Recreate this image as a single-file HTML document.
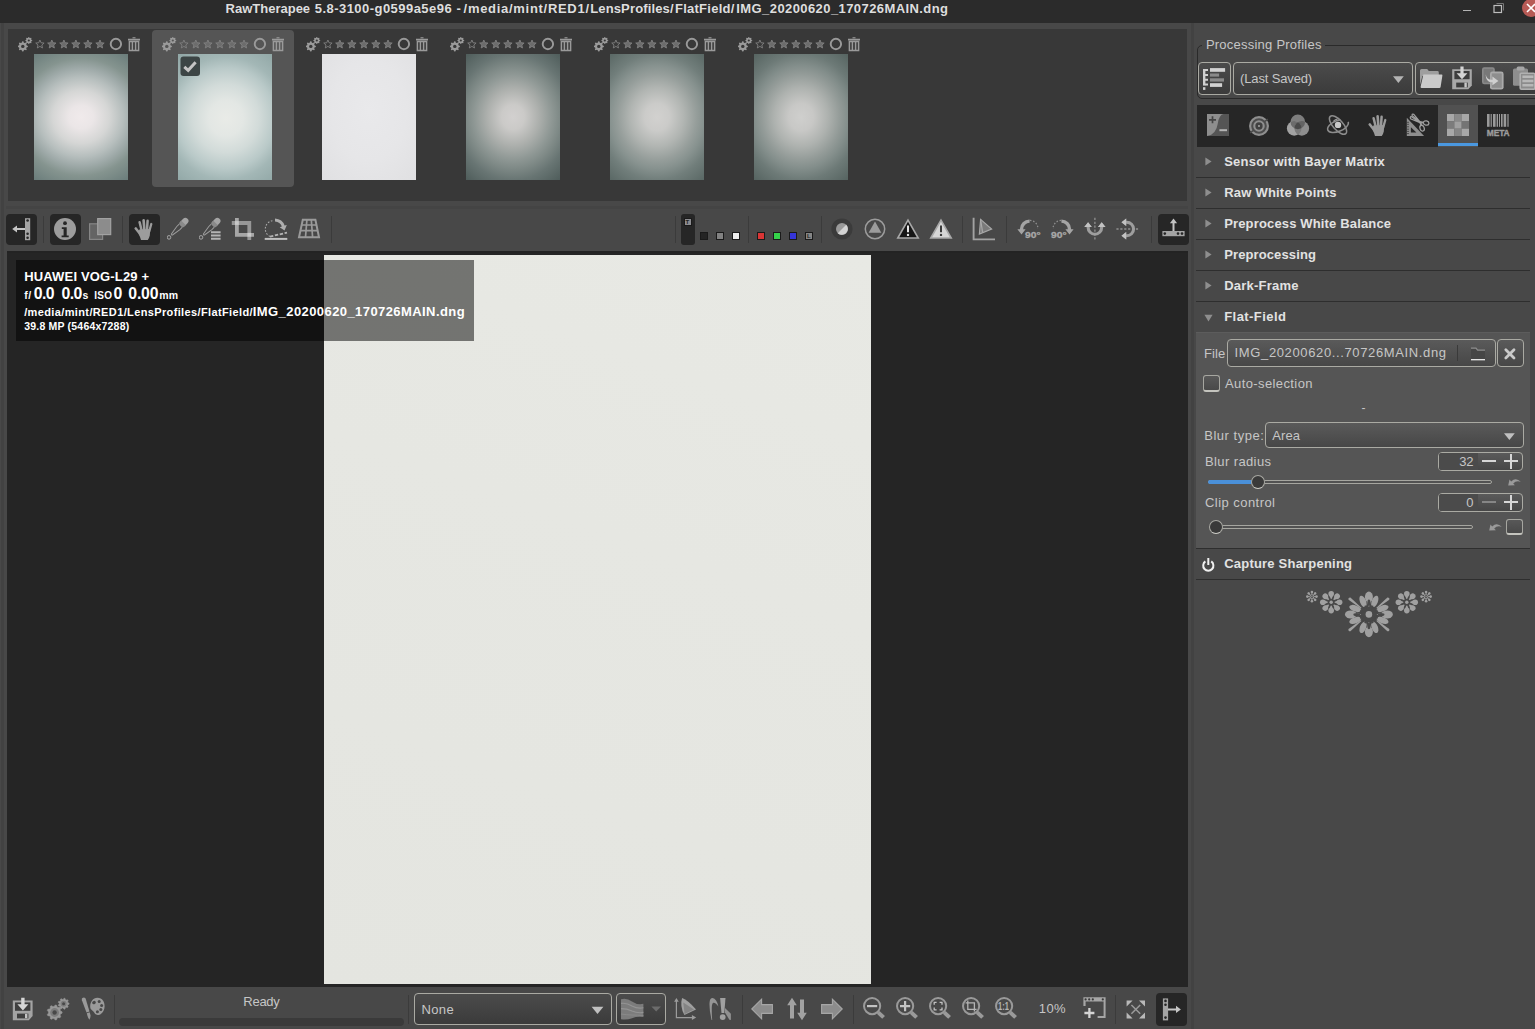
<!DOCTYPE html>
<html><head><meta charset="utf-8"><title>RawTherapee</title>
<style>
html,body{margin:0;padding:0;background:#484848;}
body{width:1535px;height:1029px;position:relative;overflow:hidden;font-family:"Liberation Sans",sans-serif;font-size:13px;color:#c8c8c8;}
body div,body span,body svg{position:absolute;box-sizing:border-box;}
span{white-space:pre;}
.sep{background:#3a3a3a;width:1px;}
.hl{background:#2c2c2c;height:2px;}
.btn{border:1px solid #8f8f8a;border-radius:4px;background:linear-gradient(#4c4c4c,#3a3a3a);}
.dk{background:#262626;border-radius:4px;}
</style></head><body>

<div style="left:0px;top:0px;width:1535px;height:23px;background:#2b2b2b;"></div>
<span style="left:225.6px;top:-0.1px;font-size:13px;line-height:17px;color:#dedede;font-weight:700;letter-spacing:-0.003px;">RawTherapee</span>
<span style="left:314.7px;top:-0.1px;font-size:13px;line-height:17px;color:#dedede;font-weight:700;letter-spacing:0.463px;">5.8-3100-g0599a5e96</span>
<span style="left:456.5px;top:-0.1px;font-size:13px;line-height:17px;color:#dedede;font-weight:700;">-</span>
<span style="left:463.6px;top:-0.1px;font-size:13px;line-height:17px;color:#dedede;font-weight:700;letter-spacing:0.704px;">/media/mint/RED1/</span>
<span style="left:590.2px;top:-0.1px;font-size:13px;line-height:17px;color:#dedede;font-weight:700;letter-spacing:0.147px;">LensProfiles/</span>
<span style="left:675px;top:-0.1px;font-size:13px;line-height:17px;color:#dedede;font-weight:700;letter-spacing:0.249px;">FlatField/</span>
<span style="left:736.3px;top:-0.1px;font-size:13px;line-height:17px;color:#dedede;font-weight:700;letter-spacing:0.416px;">IMG_20200620_170726MAIN.dng</span>
<div style="left:1463px;top:9.6px;width:8px;height:1.3px;background:#b4b4b4;"></div>
<svg style="left:1492.4px;top:1.3px;" width="14" height="13" viewBox="0 0 14 13"><path d="M4.5 2.5h7v7" fill="none" stroke="#777" stroke-width="1"/><rect x="2" y="4.5" width="7.5" height="7" fill="none" stroke="#bdbdbd" stroke-width="1.2"/></svg>
<svg style="left:1521px;top:-1px;" width="18" height="18" viewBox="0 0 18 18"><circle cx="10" cy="9" r="9" fill="#b85b56"/><path d="M6 5l8 8M14 5l-8 8" stroke="#fff" stroke-width="1.6"/></svg>
<div style="left:1px;top:23px;width:3px;height:1006px;background:#424242;"></div>
<div style="left:8px;top:29px;width:1179px;height:172px;background:#383838;"></div>
<div style="left:6px;top:206px;width:1182px;height:3px;background:#444444;"></div>
<div style="left:7px;top:251px;width:1181px;height:736px;background:#252525;"></div>
<div style="left:7px;top:251px;width:1181px;height:2px;background:#232323;"></div>
<div style="left:324px;top:255px;width:547px;height:729px;background:linear-gradient(200deg,#e8e9e4 0%,#e6e7e2 40%,#e4e5e0 100%);"></div>
<div style="left:16px;top:260px;width:458px;height:81px;background:rgba(0,0,0,0.5);"></div>
<div style="left:1191px;top:23px;width:3px;height:1006px;background:#424242;"></div>
<span style="left:24.2px;top:268.0px;font-size:13px;line-height:17px;color:#ffffff;font-weight:700;letter-spacing:0.16px;">HUAWEI VOG-L29 +</span>
<span style="left:24.2px;top:288.36px;font-size:10.5px;line-height:14px;color:#ffffff;font-weight:700;letter-spacing:0.6px;">f/</span>
<span style="left:33.7px;top:283.53px;font-size:15.8px;line-height:20px;color:#ffffff;font-weight:700;letter-spacing:-0.55px;">0.0</span>
<span style="left:61.4px;top:283.53px;font-size:15.8px;line-height:20px;color:#ffffff;font-weight:700;letter-spacing:-0.55px;">0.0</span>
<span style="left:82.6px;top:288.36px;font-size:10.5px;line-height:14px;color:#ffffff;font-weight:700;">s</span>
<span style="left:94.3px;top:288.54px;font-size:10px;line-height:14px;color:#ffffff;font-weight:700;letter-spacing:0.25px;">ISO</span>
<span style="left:113.6px;top:283.53px;font-size:15.8px;line-height:20px;color:#ffffff;font-weight:700;">0</span>
<span style="left:128.3px;top:283.53px;font-size:15.8px;line-height:20px;color:#ffffff;font-weight:700;letter-spacing:-0.2px;">0.00</span>
<span style="left:159.3px;top:288.36px;font-size:10.5px;line-height:14px;color:#ffffff;font-weight:700;letter-spacing:0.2px;">mm</span>
<span style="left:24.2px;top:304.69px;font-size:11px;line-height:15px;color:#ffffff;font-weight:700;letter-spacing:0.37px;">/media/mint/RED1/LensProfiles/FlatField/</span>
<span style="left:252.8px;top:303.0px;font-size:13px;line-height:17px;color:#ffffff;font-weight:700;letter-spacing:0.42px;">IMG_20200620_170726MAIN.dng</span>
<span style="left:24.2px;top:318.96px;font-size:10.5px;line-height:14px;color:#ffffff;font-weight:700;letter-spacing:0.2px;">39.8 MP (5464x7288)</span>
<div style="left:34px;top:54px;width:94px;height:126px;background:radial-gradient(ellipse 60% 42% at 50% 50%, #f0eaeb 0%, #ebe6e7 22%, #d5d6d5 50%, #b6bebd 75%, #a0abaa 91%, #85948f 111%, #6c7e7c 143%);"></div>
<svg style="left:17.5px;top:36.8px;" width="15" height="15" viewBox="0 0 15 15"><polygon points="9.88,8.90 9.88,9.90 8.53,10.53 8.24,11.24 8.74,12.64 8.04,13.34 6.64,12.84 5.93,13.13 5.30,14.48 4.30,14.48 3.67,13.13 2.96,12.84 1.56,13.34 0.86,12.64 1.36,11.24 1.07,10.53 -0.28,9.90 -0.28,8.90 1.07,8.27 1.36,7.56 0.86,6.16 1.56,5.46 2.96,5.96 3.67,5.67 4.30,4.32 5.30,4.32 5.93,5.67 6.64,5.96 8.04,5.46 8.74,6.16 8.24,7.56 8.53,8.27" fill="#9a9a9a"/><circle cx="4.8" cy="9.4" r="1.7" fill="#383838"/><polygon points="14.28,3.16 14.28,3.84 13.38,4.28 13.18,4.77 13.51,5.72 13.02,6.21 12.07,5.88 11.58,6.08 11.14,6.98 10.46,6.98 10.02,6.08 9.53,5.88 8.58,6.21 8.09,5.72 8.42,4.77 8.22,4.28 7.32,3.84 7.32,3.16 8.22,2.72 8.42,2.23 8.09,1.28 8.58,0.79 9.53,1.12 10.02,0.92 10.46,0.02 11.14,0.02 11.58,0.92 12.07,1.12 13.02,0.79 13.51,1.28 13.18,2.23 13.38,2.72" fill="#9a9a9a"/><circle cx="10.8" cy="3.5" r="1.1" fill="#383838"/></svg>
<svg style="left:35px;top:39px;" width="72" height="11" viewBox="0 0 72 11"><polygon points="4.90,1.00 6.08,3.78 9.08,4.04 6.80,6.02 7.49,8.96 4.90,7.40 2.31,8.96 3.00,6.02 0.72,4.04 3.72,3.78" fill="#383838" stroke="#808080" stroke-width="0.9"/><polygon points="16.80,1.00 17.98,3.78 20.98,4.04 18.70,6.02 19.39,8.96 16.80,7.40 14.21,8.96 14.90,6.02 12.62,4.04 15.62,3.78" fill="#6c6c6c" stroke="#808080" stroke-width="0.9"/><polygon points="28.90,1.00 30.08,3.78 33.08,4.04 30.80,6.02 31.49,8.96 28.90,7.40 26.31,8.96 27.00,6.02 24.72,4.04 27.72,3.78" fill="#6c6c6c" stroke="#808080" stroke-width="0.9"/><polygon points="40.90,1.00 42.08,3.78 45.08,4.04 42.80,6.02 43.49,8.96 40.90,7.40 38.31,8.96 39.00,6.02 36.72,4.04 39.72,3.78" fill="#6c6c6c" stroke="#808080" stroke-width="0.9"/><polygon points="52.90,1.00 54.08,3.78 57.08,4.04 54.80,6.02 55.49,8.96 52.90,7.40 50.31,8.96 51.00,6.02 48.72,4.04 51.72,3.78" fill="#6c6c6c" stroke="#808080" stroke-width="0.9"/><polygon points="65.00,1.00 66.18,3.78 69.18,4.04 66.90,6.02 67.59,8.96 65.00,7.40 62.41,8.96 63.10,6.02 60.82,4.04 63.82,3.78" fill="#6c6c6c" stroke="#808080" stroke-width="0.9"/></svg>
<svg style="left:109px;top:37px;" width="14" height="14" viewBox="0 0 14 14"><circle cx="6.9" cy="7" r="5.2" fill="none" stroke="#9a9a9a" stroke-width="1.9"/></svg>
<svg style="left:127px;top:36px;" width="14" height="16" viewBox="0 0 14 16"><path d="M5.5 1.2h3v1h-3z M1 2.8h12v1.8h-12z" fill="#9a9a9a"/><path d="M2.4 5.6h9.2v9h-9.2z" fill="none" stroke="#9a9a9a" stroke-width="1.5"/><path d="M5.4 6v8M8.6 6v8" stroke="#9a9a9a" stroke-width="1.5"/></svg>
<div style="left:152px;top:30px;width:142px;height:157px;background:#555555;border-radius:4px;"></div>
<div style="left:178px;top:54px;width:94px;height:126px;background:radial-gradient(ellipse 57% 44% at 51% 51%, #e9ebe7 0%, #e3e7e4 32%, #d2dbd9 62%, #b9c9c8 91%, #a3b7b6 111%, #92a8a7 143%);"></div>
<svg style="left:161.5px;top:36.8px;" width="15" height="15" viewBox="0 0 15 15"><polygon points="9.88,8.90 9.88,9.90 8.53,10.53 8.24,11.24 8.74,12.64 8.04,13.34 6.64,12.84 5.93,13.13 5.30,14.48 4.30,14.48 3.67,13.13 2.96,12.84 1.56,13.34 0.86,12.64 1.36,11.24 1.07,10.53 -0.28,9.90 -0.28,8.90 1.07,8.27 1.36,7.56 0.86,6.16 1.56,5.46 2.96,5.96 3.67,5.67 4.30,4.32 5.30,4.32 5.93,5.67 6.64,5.96 8.04,5.46 8.74,6.16 8.24,7.56 8.53,8.27" fill="#9a9a9a"/><circle cx="4.8" cy="9.4" r="1.7" fill="#555555"/><polygon points="14.28,3.16 14.28,3.84 13.38,4.28 13.18,4.77 13.51,5.72 13.02,6.21 12.07,5.88 11.58,6.08 11.14,6.98 10.46,6.98 10.02,6.08 9.53,5.88 8.58,6.21 8.09,5.72 8.42,4.77 8.22,4.28 7.32,3.84 7.32,3.16 8.22,2.72 8.42,2.23 8.09,1.28 8.58,0.79 9.53,1.12 10.02,0.92 10.46,0.02 11.14,0.02 11.58,0.92 12.07,1.12 13.02,0.79 13.51,1.28 13.18,2.23 13.38,2.72" fill="#9a9a9a"/><circle cx="10.8" cy="3.5" r="1.1" fill="#555555"/></svg>
<svg style="left:179px;top:39px;" width="72" height="11" viewBox="0 0 72 11"><polygon points="4.90,1.00 6.08,3.78 9.08,4.04 6.80,6.02 7.49,8.96 4.90,7.40 2.31,8.96 3.00,6.02 0.72,4.04 3.72,3.78" fill="#555555" stroke="#808080" stroke-width="0.9"/><polygon points="16.80,1.00 17.98,3.78 20.98,4.04 18.70,6.02 19.39,8.96 16.80,7.40 14.21,8.96 14.90,6.02 12.62,4.04 15.62,3.78" fill="#6c6c6c" stroke="#808080" stroke-width="0.9"/><polygon points="28.90,1.00 30.08,3.78 33.08,4.04 30.80,6.02 31.49,8.96 28.90,7.40 26.31,8.96 27.00,6.02 24.72,4.04 27.72,3.78" fill="#6c6c6c" stroke="#808080" stroke-width="0.9"/><polygon points="40.90,1.00 42.08,3.78 45.08,4.04 42.80,6.02 43.49,8.96 40.90,7.40 38.31,8.96 39.00,6.02 36.72,4.04 39.72,3.78" fill="#6c6c6c" stroke="#808080" stroke-width="0.9"/><polygon points="52.90,1.00 54.08,3.78 57.08,4.04 54.80,6.02 55.49,8.96 52.90,7.40 50.31,8.96 51.00,6.02 48.72,4.04 51.72,3.78" fill="#6c6c6c" stroke="#808080" stroke-width="0.9"/><polygon points="65.00,1.00 66.18,3.78 69.18,4.04 66.90,6.02 67.59,8.96 65.00,7.40 62.41,8.96 63.10,6.02 60.82,4.04 63.82,3.78" fill="#6c6c6c" stroke="#808080" stroke-width="0.9"/></svg>
<svg style="left:253px;top:37px;" width="14" height="14" viewBox="0 0 14 14"><circle cx="6.9" cy="7" r="5.2" fill="none" stroke="#9a9a9a" stroke-width="1.9"/></svg>
<svg style="left:271px;top:36px;" width="14" height="16" viewBox="0 0 14 16"><path d="M5.5 1.2h3v1h-3z M1 2.8h12v1.8h-12z" fill="#9a9a9a"/><path d="M2.4 5.6h9.2v9h-9.2z" fill="none" stroke="#9a9a9a" stroke-width="1.5"/><path d="M5.4 6v8M8.6 6v8" stroke="#9a9a9a" stroke-width="1.5"/></svg>
<div style="left:322px;top:54px;width:94px;height:126px;background:radial-gradient(ellipse 80% 80% at 50% 45%, #e9e9eb 0%, #e6e6e8 50%, #dfdfe1 100%);"></div>
<svg style="left:305.5px;top:36.8px;" width="15" height="15" viewBox="0 0 15 15"><polygon points="9.88,8.90 9.88,9.90 8.53,10.53 8.24,11.24 8.74,12.64 8.04,13.34 6.64,12.84 5.93,13.13 5.30,14.48 4.30,14.48 3.67,13.13 2.96,12.84 1.56,13.34 0.86,12.64 1.36,11.24 1.07,10.53 -0.28,9.90 -0.28,8.90 1.07,8.27 1.36,7.56 0.86,6.16 1.56,5.46 2.96,5.96 3.67,5.67 4.30,4.32 5.30,4.32 5.93,5.67 6.64,5.96 8.04,5.46 8.74,6.16 8.24,7.56 8.53,8.27" fill="#9a9a9a"/><circle cx="4.8" cy="9.4" r="1.7" fill="#383838"/><polygon points="14.28,3.16 14.28,3.84 13.38,4.28 13.18,4.77 13.51,5.72 13.02,6.21 12.07,5.88 11.58,6.08 11.14,6.98 10.46,6.98 10.02,6.08 9.53,5.88 8.58,6.21 8.09,5.72 8.42,4.77 8.22,4.28 7.32,3.84 7.32,3.16 8.22,2.72 8.42,2.23 8.09,1.28 8.58,0.79 9.53,1.12 10.02,0.92 10.46,0.02 11.14,0.02 11.58,0.92 12.07,1.12 13.02,0.79 13.51,1.28 13.18,2.23 13.38,2.72" fill="#9a9a9a"/><circle cx="10.8" cy="3.5" r="1.1" fill="#383838"/></svg>
<svg style="left:323px;top:39px;" width="72" height="11" viewBox="0 0 72 11"><polygon points="4.90,1.00 6.08,3.78 9.08,4.04 6.80,6.02 7.49,8.96 4.90,7.40 2.31,8.96 3.00,6.02 0.72,4.04 3.72,3.78" fill="#383838" stroke="#808080" stroke-width="0.9"/><polygon points="16.80,1.00 17.98,3.78 20.98,4.04 18.70,6.02 19.39,8.96 16.80,7.40 14.21,8.96 14.90,6.02 12.62,4.04 15.62,3.78" fill="#6c6c6c" stroke="#808080" stroke-width="0.9"/><polygon points="28.90,1.00 30.08,3.78 33.08,4.04 30.80,6.02 31.49,8.96 28.90,7.40 26.31,8.96 27.00,6.02 24.72,4.04 27.72,3.78" fill="#6c6c6c" stroke="#808080" stroke-width="0.9"/><polygon points="40.90,1.00 42.08,3.78 45.08,4.04 42.80,6.02 43.49,8.96 40.90,7.40 38.31,8.96 39.00,6.02 36.72,4.04 39.72,3.78" fill="#6c6c6c" stroke="#808080" stroke-width="0.9"/><polygon points="52.90,1.00 54.08,3.78 57.08,4.04 54.80,6.02 55.49,8.96 52.90,7.40 50.31,8.96 51.00,6.02 48.72,4.04 51.72,3.78" fill="#6c6c6c" stroke="#808080" stroke-width="0.9"/><polygon points="65.00,1.00 66.18,3.78 69.18,4.04 66.90,6.02 67.59,8.96 65.00,7.40 62.41,8.96 63.10,6.02 60.82,4.04 63.82,3.78" fill="#6c6c6c" stroke="#808080" stroke-width="0.9"/></svg>
<svg style="left:397px;top:37px;" width="14" height="14" viewBox="0 0 14 14"><circle cx="6.9" cy="7" r="5.2" fill="none" stroke="#9a9a9a" stroke-width="1.9"/></svg>
<svg style="left:415px;top:36px;" width="14" height="16" viewBox="0 0 14 16"><path d="M5.5 1.2h3v1h-3z M1 2.8h12v1.8h-12z" fill="#9a9a9a"/><path d="M2.4 5.6h9.2v9h-9.2z" fill="none" stroke="#9a9a9a" stroke-width="1.5"/><path d="M5.4 6v8M8.6 6v8" stroke="#9a9a9a" stroke-width="1.5"/></svg>
<div style="left:466px;top:54px;width:94px;height:126px;background:radial-gradient(ellipse 55% 45% at 50% 50%, #d2d0cf 0%, #cbcac8 22%, #adb0ad 50%, #8f9895 75%, #7e8986 91%, #687573 111%, #4f5d5b 143%);"></div>
<svg style="left:449.5px;top:36.8px;" width="15" height="15" viewBox="0 0 15 15"><polygon points="9.88,8.90 9.88,9.90 8.53,10.53 8.24,11.24 8.74,12.64 8.04,13.34 6.64,12.84 5.93,13.13 5.30,14.48 4.30,14.48 3.67,13.13 2.96,12.84 1.56,13.34 0.86,12.64 1.36,11.24 1.07,10.53 -0.28,9.90 -0.28,8.90 1.07,8.27 1.36,7.56 0.86,6.16 1.56,5.46 2.96,5.96 3.67,5.67 4.30,4.32 5.30,4.32 5.93,5.67 6.64,5.96 8.04,5.46 8.74,6.16 8.24,7.56 8.53,8.27" fill="#9a9a9a"/><circle cx="4.8" cy="9.4" r="1.7" fill="#383838"/><polygon points="14.28,3.16 14.28,3.84 13.38,4.28 13.18,4.77 13.51,5.72 13.02,6.21 12.07,5.88 11.58,6.08 11.14,6.98 10.46,6.98 10.02,6.08 9.53,5.88 8.58,6.21 8.09,5.72 8.42,4.77 8.22,4.28 7.32,3.84 7.32,3.16 8.22,2.72 8.42,2.23 8.09,1.28 8.58,0.79 9.53,1.12 10.02,0.92 10.46,0.02 11.14,0.02 11.58,0.92 12.07,1.12 13.02,0.79 13.51,1.28 13.18,2.23 13.38,2.72" fill="#9a9a9a"/><circle cx="10.8" cy="3.5" r="1.1" fill="#383838"/></svg>
<svg style="left:467px;top:39px;" width="72" height="11" viewBox="0 0 72 11"><polygon points="4.90,1.00 6.08,3.78 9.08,4.04 6.80,6.02 7.49,8.96 4.90,7.40 2.31,8.96 3.00,6.02 0.72,4.04 3.72,3.78" fill="#383838" stroke="#808080" stroke-width="0.9"/><polygon points="16.80,1.00 17.98,3.78 20.98,4.04 18.70,6.02 19.39,8.96 16.80,7.40 14.21,8.96 14.90,6.02 12.62,4.04 15.62,3.78" fill="#6c6c6c" stroke="#808080" stroke-width="0.9"/><polygon points="28.90,1.00 30.08,3.78 33.08,4.04 30.80,6.02 31.49,8.96 28.90,7.40 26.31,8.96 27.00,6.02 24.72,4.04 27.72,3.78" fill="#6c6c6c" stroke="#808080" stroke-width="0.9"/><polygon points="40.90,1.00 42.08,3.78 45.08,4.04 42.80,6.02 43.49,8.96 40.90,7.40 38.31,8.96 39.00,6.02 36.72,4.04 39.72,3.78" fill="#6c6c6c" stroke="#808080" stroke-width="0.9"/><polygon points="52.90,1.00 54.08,3.78 57.08,4.04 54.80,6.02 55.49,8.96 52.90,7.40 50.31,8.96 51.00,6.02 48.72,4.04 51.72,3.78" fill="#6c6c6c" stroke="#808080" stroke-width="0.9"/><polygon points="65.00,1.00 66.18,3.78 69.18,4.04 66.90,6.02 67.59,8.96 65.00,7.40 62.41,8.96 63.10,6.02 60.82,4.04 63.82,3.78" fill="#6c6c6c" stroke="#808080" stroke-width="0.9"/></svg>
<svg style="left:541px;top:37px;" width="14" height="14" viewBox="0 0 14 14"><circle cx="6.9" cy="7" r="5.2" fill="none" stroke="#9a9a9a" stroke-width="1.9"/></svg>
<svg style="left:559px;top:36px;" width="14" height="16" viewBox="0 0 14 16"><path d="M5.5 1.2h3v1h-3z M1 2.8h12v1.8h-12z" fill="#9a9a9a"/><path d="M2.4 5.6h9.2v9h-9.2z" fill="none" stroke="#9a9a9a" stroke-width="1.5"/><path d="M5.4 6v8M8.6 6v8" stroke="#9a9a9a" stroke-width="1.5"/></svg>
<div style="left:610px;top:54px;width:94px;height:126px;background:radial-gradient(ellipse 55% 45% at 50% 50%, #d2d1cf 0%, #cbcbc9 24%, #b1b5b2 52%, #969e9b 76%, #87928f 91%, #717e7b 111%, #5a6865 143%);"></div>
<svg style="left:593.5px;top:36.8px;" width="15" height="15" viewBox="0 0 15 15"><polygon points="9.88,8.90 9.88,9.90 8.53,10.53 8.24,11.24 8.74,12.64 8.04,13.34 6.64,12.84 5.93,13.13 5.30,14.48 4.30,14.48 3.67,13.13 2.96,12.84 1.56,13.34 0.86,12.64 1.36,11.24 1.07,10.53 -0.28,9.90 -0.28,8.90 1.07,8.27 1.36,7.56 0.86,6.16 1.56,5.46 2.96,5.96 3.67,5.67 4.30,4.32 5.30,4.32 5.93,5.67 6.64,5.96 8.04,5.46 8.74,6.16 8.24,7.56 8.53,8.27" fill="#9a9a9a"/><circle cx="4.8" cy="9.4" r="1.7" fill="#383838"/><polygon points="14.28,3.16 14.28,3.84 13.38,4.28 13.18,4.77 13.51,5.72 13.02,6.21 12.07,5.88 11.58,6.08 11.14,6.98 10.46,6.98 10.02,6.08 9.53,5.88 8.58,6.21 8.09,5.72 8.42,4.77 8.22,4.28 7.32,3.84 7.32,3.16 8.22,2.72 8.42,2.23 8.09,1.28 8.58,0.79 9.53,1.12 10.02,0.92 10.46,0.02 11.14,0.02 11.58,0.92 12.07,1.12 13.02,0.79 13.51,1.28 13.18,2.23 13.38,2.72" fill="#9a9a9a"/><circle cx="10.8" cy="3.5" r="1.1" fill="#383838"/></svg>
<svg style="left:611px;top:39px;" width="72" height="11" viewBox="0 0 72 11"><polygon points="4.90,1.00 6.08,3.78 9.08,4.04 6.80,6.02 7.49,8.96 4.90,7.40 2.31,8.96 3.00,6.02 0.72,4.04 3.72,3.78" fill="#383838" stroke="#808080" stroke-width="0.9"/><polygon points="16.80,1.00 17.98,3.78 20.98,4.04 18.70,6.02 19.39,8.96 16.80,7.40 14.21,8.96 14.90,6.02 12.62,4.04 15.62,3.78" fill="#6c6c6c" stroke="#808080" stroke-width="0.9"/><polygon points="28.90,1.00 30.08,3.78 33.08,4.04 30.80,6.02 31.49,8.96 28.90,7.40 26.31,8.96 27.00,6.02 24.72,4.04 27.72,3.78" fill="#6c6c6c" stroke="#808080" stroke-width="0.9"/><polygon points="40.90,1.00 42.08,3.78 45.08,4.04 42.80,6.02 43.49,8.96 40.90,7.40 38.31,8.96 39.00,6.02 36.72,4.04 39.72,3.78" fill="#6c6c6c" stroke="#808080" stroke-width="0.9"/><polygon points="52.90,1.00 54.08,3.78 57.08,4.04 54.80,6.02 55.49,8.96 52.90,7.40 50.31,8.96 51.00,6.02 48.72,4.04 51.72,3.78" fill="#6c6c6c" stroke="#808080" stroke-width="0.9"/><polygon points="65.00,1.00 66.18,3.78 69.18,4.04 66.90,6.02 67.59,8.96 65.00,7.40 62.41,8.96 63.10,6.02 60.82,4.04 63.82,3.78" fill="#6c6c6c" stroke="#808080" stroke-width="0.9"/></svg>
<svg style="left:685px;top:37px;" width="14" height="14" viewBox="0 0 14 14"><circle cx="6.9" cy="7" r="5.2" fill="none" stroke="#9a9a9a" stroke-width="1.9"/></svg>
<svg style="left:703px;top:36px;" width="14" height="16" viewBox="0 0 14 16"><path d="M5.5 1.2h3v1h-3z M1 2.8h12v1.8h-12z" fill="#9a9a9a"/><path d="M2.4 5.6h9.2v9h-9.2z" fill="none" stroke="#9a9a9a" stroke-width="1.5"/><path d="M5.4 6v8M8.6 6v8" stroke="#9a9a9a" stroke-width="1.5"/></svg>
<div style="left:754px;top:54px;width:94px;height:126px;background:radial-gradient(ellipse 55% 45% at 50% 50%, #cfcfcd 0%, #c8c8c6 24%, #aeb2af 52%, #939b98 76%, #838e8b 91%, #6d7a77 111%, #566461 143%);"></div>
<svg style="left:737.5px;top:36.8px;" width="15" height="15" viewBox="0 0 15 15"><polygon points="9.88,8.90 9.88,9.90 8.53,10.53 8.24,11.24 8.74,12.64 8.04,13.34 6.64,12.84 5.93,13.13 5.30,14.48 4.30,14.48 3.67,13.13 2.96,12.84 1.56,13.34 0.86,12.64 1.36,11.24 1.07,10.53 -0.28,9.90 -0.28,8.90 1.07,8.27 1.36,7.56 0.86,6.16 1.56,5.46 2.96,5.96 3.67,5.67 4.30,4.32 5.30,4.32 5.93,5.67 6.64,5.96 8.04,5.46 8.74,6.16 8.24,7.56 8.53,8.27" fill="#9a9a9a"/><circle cx="4.8" cy="9.4" r="1.7" fill="#383838"/><polygon points="14.28,3.16 14.28,3.84 13.38,4.28 13.18,4.77 13.51,5.72 13.02,6.21 12.07,5.88 11.58,6.08 11.14,6.98 10.46,6.98 10.02,6.08 9.53,5.88 8.58,6.21 8.09,5.72 8.42,4.77 8.22,4.28 7.32,3.84 7.32,3.16 8.22,2.72 8.42,2.23 8.09,1.28 8.58,0.79 9.53,1.12 10.02,0.92 10.46,0.02 11.14,0.02 11.58,0.92 12.07,1.12 13.02,0.79 13.51,1.28 13.18,2.23 13.38,2.72" fill="#9a9a9a"/><circle cx="10.8" cy="3.5" r="1.1" fill="#383838"/></svg>
<svg style="left:755px;top:39px;" width="72" height="11" viewBox="0 0 72 11"><polygon points="4.90,1.00 6.08,3.78 9.08,4.04 6.80,6.02 7.49,8.96 4.90,7.40 2.31,8.96 3.00,6.02 0.72,4.04 3.72,3.78" fill="#383838" stroke="#808080" stroke-width="0.9"/><polygon points="16.80,1.00 17.98,3.78 20.98,4.04 18.70,6.02 19.39,8.96 16.80,7.40 14.21,8.96 14.90,6.02 12.62,4.04 15.62,3.78" fill="#6c6c6c" stroke="#808080" stroke-width="0.9"/><polygon points="28.90,1.00 30.08,3.78 33.08,4.04 30.80,6.02 31.49,8.96 28.90,7.40 26.31,8.96 27.00,6.02 24.72,4.04 27.72,3.78" fill="#6c6c6c" stroke="#808080" stroke-width="0.9"/><polygon points="40.90,1.00 42.08,3.78 45.08,4.04 42.80,6.02 43.49,8.96 40.90,7.40 38.31,8.96 39.00,6.02 36.72,4.04 39.72,3.78" fill="#6c6c6c" stroke="#808080" stroke-width="0.9"/><polygon points="52.90,1.00 54.08,3.78 57.08,4.04 54.80,6.02 55.49,8.96 52.90,7.40 50.31,8.96 51.00,6.02 48.72,4.04 51.72,3.78" fill="#6c6c6c" stroke="#808080" stroke-width="0.9"/><polygon points="65.00,1.00 66.18,3.78 69.18,4.04 66.90,6.02 67.59,8.96 65.00,7.40 62.41,8.96 63.10,6.02 60.82,4.04 63.82,3.78" fill="#6c6c6c" stroke="#808080" stroke-width="0.9"/></svg>
<svg style="left:829px;top:37px;" width="14" height="14" viewBox="0 0 14 14"><circle cx="6.9" cy="7" r="5.2" fill="none" stroke="#9a9a9a" stroke-width="1.9"/></svg>
<svg style="left:847px;top:36px;" width="14" height="16" viewBox="0 0 14 16"><path d="M5.5 1.2h3v1h-3z M1 2.8h12v1.8h-12z" fill="#9a9a9a"/><path d="M2.4 5.6h9.2v9h-9.2z" fill="none" stroke="#9a9a9a" stroke-width="1.5"/><path d="M5.4 6v8M8.6 6v8" stroke="#9a9a9a" stroke-width="1.5"/></svg>
<svg style="left:179.7px;top:55.7px;" width="22" height="22" viewBox="0 0 22 22"><rect x="0.5" y="0.5" width="19.5" height="19.5" rx="3" fill="#3c4545"/><path d="M4.3 10.8l3.9 3.5l7.4-8" fill="none" stroke="#c4c4c4" stroke-width="3"/></svg>
<div style="left:6px;top:214px;width:31px;height:31px;background:#262626;border-radius:4px;"></div>
<svg style="left:12px;top:218px;" width="20" height="23" viewBox="0 0 20 23"><path d="M0.2 11L5 7.4V10h8v2H5v2.6z" fill="#c4c4c4"/><rect x="13" y="0.2" width="5.2" height="22" fill="#a4a4a4"/><circle cx="15.6" cy="2.5" r="1.3" fill="#262626"/><circle cx="15.6" cy="15.8" r="1.3" fill="#262626"/><circle cx="15.6" cy="19.7" r="1.3" fill="#262626"/></svg>
<div style="left:43px;top:216px;width:1px;height:27px;background:#3b3b3b;"></div>
<div style="left:50px;top:214px;width:31px;height:31px;background:#262626;border-radius:4px;"></div>
<svg style="left:54px;top:218px;" width="22" height="22" viewBox="0 0 22 22"><circle cx="11" cy="11" r="11" fill="#9c9c9c"/><circle cx="11" cy="5.2" r="1.9" fill="#262626"/><path d="M7.8 9.2h4.9v8.3h2v1.7H7.6v-1.7h2v-6.6H7.8z" fill="#262626"/></svg>
<svg style="left:88px;top:217px;" width="24" height="24" viewBox="0 0 24 24"><rect x="1.6" y="6.8" width="13" height="15.6" fill="#646464" stroke="#868686" stroke-width="1.2"/><rect x="9.7" y="1.6" width="13" height="16" fill="#8c8c8c" stroke="#a2a2a2" stroke-width="1.2"/></svg>
<div style="left:122px;top:216px;width:1px;height:27px;background:#3b3b3b;"></div>
<div style="left:129px;top:214px;width:31px;height:31px;background:#262626;border-radius:4px;"></div>
<svg style="left:134px;top:218px;" width="20" height="23" viewBox="0 0 20 23"><g fill="none" stroke="#9c9c9c" stroke-linecap="round"><path d="M7.8 13L5.6 4.2" stroke-width="2.5"/><path d="M10.4 12L9.6 2.2" stroke-width="2.6"/><path d="M13 12L13.6 2.8" stroke-width="2.5"/><path d="M15.2 13.5L17.3 6" stroke-width="2.3"/><path d="M7 17L1.8 10.5" stroke-width="2.6"/></g><path d="M5.2 11.5L16.3 11L15.8 17.5Q15.2 20 13.8 22H7Q6.5 19.5 4.6 16z" fill="#9c9c9c"/></svg>
<svg style="left:166.5px;top:217.3px;" width="23" height="23" viewBox="0 0 23 23"><g transform="translate(17 5.4) rotate(45)"><rect x="-3.1" y="-5" width="6.2" height="9.6" rx="3.1" fill="#a4a4a4"/><path d="M-3.1 0.6h6.2v2.4a1.6 1.6 0 0 1 -1.6 1.6h-3a1.6 1.6 0 0 1 -1.6 -1.6z" fill="#8a8a8a"/><path d="M-2.2 4.6V8L-0.8 17Q0 18.2 0.8 17L2.2 8V4.6" fill="none" stroke="#9c9c9c" stroke-width="1"/><circle cx="0" cy="21.2" r="1.7" fill="none" stroke="#9c9c9c" stroke-width="1"/></g></svg>
<svg style="left:198.6px;top:217.3px;" width="23" height="23" viewBox="0 0 23 23"><g transform="translate(17 5.4) rotate(45)"><rect x="-3.1" y="-5" width="6.2" height="9.6" rx="3.1" fill="#a4a4a4"/><path d="M-3.1 0.6h6.2v2.4a1.6 1.6 0 0 1 -1.6 1.6h-3a1.6 1.6 0 0 1 -1.6 -1.6z" fill="#8a8a8a"/><path d="M-2.2 4.6V8L-0.8 17Q0 18.2 0.8 17L2.2 8V4.6" fill="none" stroke="#9c9c9c" stroke-width="1"/><circle cx="0" cy="21.2" r="1.7" fill="none" stroke="#9c9c9c" stroke-width="1"/></g><path d="M12 15.3h9.6M12 18.6h9.6M12 21.8h9.6" stroke="#b4b4b4" stroke-width="2"/></svg>
<svg style="left:231px;top:217px;" width="24" height="24" viewBox="0 0 24 24"><path d="M4 1h3.8v14.9H23v3.8H4z" fill="#a6a6a6"/><path d="M0.8 4.1h19.4V23h-3.8V7.9H0.8z" fill="#a6a6a6" fill-opacity="0.85"/><rect x="4" y="4.1" width="3.8" height="3.8" fill="#c8c8c8"/><rect x="16.4" y="15.9" width="3.8" height="3.8" fill="#c8c8c8"/></svg>
<svg style="left:264px;top:217px;" width="24" height="24" viewBox="0 0 24 24"><path d="M0.7 21.9h22.6" stroke="#c0c0c0" stroke-width="2"/><path d="M6 19.6L23 15.6" stroke="#b4b4b4" stroke-width="1.8" stroke-dasharray="3.4 1.6"/><path d="M6 19.5A8.4 8.4 0 0 1 9 3.6" fill="none" stroke="#a8a8a8" stroke-width="1.1" stroke-dasharray="1.6 1.6"/><path d="M11 1.6Q18.5 2.2 20.6 8.6l2.2-.6l-2.3 5.6l-4.8-3.4l2.2-.7Q16.2 5 11 4.6z" fill="#aeaeae"/></svg>
<svg style="left:297px;top:217px;" width="24" height="24" viewBox="0 0 24 24"><g fill="none" stroke="#9a9a9a" stroke-width="1.7"><path d="M5.8 2.8h12.6l3.6 17.4H2z" stroke-width="2"/><path d="M9.9 2.8L8.5 20.2M14.3 2.8l1.3 17.4M4.7 8h15M3.5 13.6h17.2"/></g></svg>
<div style="left:331px;top:216px;width:1px;height:27px;background:#3b3b3b;"></div>
<div style="left:675px;top:216px;width:1px;height:27px;background:#3b3b3b;"></div>
<div style="left:681px;top:214px;width:14px;height:31px;background:#262626;border-radius:3px;"></div>
<div style="left:684px;top:218px;width:8px;height:8px;background:#8c8c90;border:1px solid #1a1a1a;"></div>
<span style="left:685.6px;top:219px;font-size:6px;line-height:6px;color:#222;font-weight:700;">T</span>
<div style="left:700px;top:232px;width:8px;height:8px;background:#242424;border:1px solid #1a1a1a;"></div>
<div style="left:716px;top:232px;width:8px;height:8px;background:#828282;border:1px solid #1a1a1a;"></div>
<div style="left:732px;top:232px;width:8px;height:8px;background:#eeeeee;border:1px solid #1a1a1a;"></div>
<div style="left:748px;top:216px;width:1px;height:27px;background:#3b3b3b;"></div>
<div style="left:757px;top:232px;width:8px;height:8px;background:#d93535;border:1px solid #1a1a1a;"></div>
<div style="left:773px;top:232px;width:8px;height:8px;background:#35d24a;border:1px solid #1a1a1a;"></div>
<div style="left:789px;top:232px;width:8px;height:8px;background:#3535d8;border:1px solid #1a1a1a;"></div>
<div style="left:805px;top:232px;width:8px;height:8px;background:#868686;border:1px solid #1a1a1a;"></div>
<span style="left:807px;top:233px;font-size:6px;line-height:6px;color:#222;font-weight:700;">L</span>
<div style="left:821px;top:216px;width:1px;height:27px;background:#3b3b3b;"></div>
<svg style="left:831px;top:218px;" width="22" height="22" viewBox="0 0 22 22"><circle cx="11" cy="11" r="10.6" fill="#3b3b3b"/><circle cx="11" cy="11" r="6" fill="#9a9a9a"/><path d="M15.24 6.76A6 6 0 0 1 6.76 15.24z" fill="#d4d4d4"/></svg>
<svg style="left:864px;top:218px;" width="22" height="22" viewBox="0 0 22 22"><circle cx="11" cy="11" r="9.7" fill="none" stroke="#9c9c9c" stroke-width="1.5"/><path d="M11 3.6L17.4 14.8H4.6z" fill="#9c9c9c"/></svg>
<svg style="left:896px;top:218px;" width="24" height="22" viewBox="0 0 24 22"><path d="M12 2.2L22.2 20H1.8z" fill="#161616" stroke="#a8a8a8" stroke-width="1.6" stroke-linejoin="miter"/><path d="M12 7.6v6.6" stroke="#e8e8e8" stroke-width="2"/><circle cx="12" cy="16.9" r="1.2" fill="#e8e8e8"/></svg>
<svg style="left:929px;top:218px;" width="24" height="22" viewBox="0 0 24 22"><path d="M12 2.2L22.2 20H1.8z" fill="#d6d6d6" stroke="#a8a8a8" stroke-width="1.6"/><path d="M12 7.6v6.6" stroke="#3a3a3a" stroke-width="2"/><circle cx="12" cy="16.9" r="1.2" fill="#3a3a3a"/></svg>
<div style="left:962px;top:216px;width:1px;height:27px;background:#3b3b3b;"></div>
<svg style="left:972px;top:217px;" width="24" height="24" viewBox="0 0 24 24"><path d="M1.6 0.8V22.4H23" fill="none" stroke="#a2a2a2" stroke-width="1.9"/><path d="M8.6 2.4L19.6 12L7.4 17z" fill="#7a7a7a" stroke="#a8a8a8" stroke-width="1.2"/><path d="M8.6 2.4L10.6 15.6" stroke="#a8a8a8" stroke-width="1.2"/></svg>
<div style="left:1006px;top:216px;width:1px;height:27px;background:#3b3b3b;"></div>
<svg style="left:1017px;top:218px;" width="25" height="23" viewBox="0 0 25 23"><path d="M2.8 11.2A9.8 9.8 0 0 1 12.6 1.4L12.6 4.8A6.4 6.4 0 0 0 6.2 11.2L8.6 11.2L4.5 16.6L0.4 11.2z" fill="#a4a4a4"/><path d="M13 2.4A8.4 8.4 0 0 1 21 11" fill="none" stroke="#8e8e8e" stroke-width="1.2" stroke-dasharray="1.5 1.7"/></svg>
<span style="left:1024.6px;top:229.11px;font-size:9.2px;line-height:13px;color:#a8a8a8;font-weight:700;-webkit-text-stroke:0.3px #a8a8a8;transform:scaleX(1.12);transform-origin:0 0;">90°</span>
<svg style="left:1049px;top:218px;" width="25" height="23" viewBox="0 0 25 23"><path d="M22.2 11.2A9.8 9.8 0 0 0 12.4 1.4L12.4 4.8A6.4 6.4 0 0 1 18.8 11.2L16.4 11.2L20.5 16.6L24.6 11.2z" fill="#a4a4a4"/><path d="M12 2.4A8.4 8.4 0 0 0 4 11" fill="none" stroke="#8e8e8e" stroke-width="1.2" stroke-dasharray="1.5 1.7"/></svg>
<span style="left:1050.6px;top:229.11px;font-size:9.2px;line-height:13px;color:#a8a8a8;font-weight:700;-webkit-text-stroke:0.3px #a8a8a8;transform:scaleX(1.12);transform-origin:0 0;">90°</span>
<svg style="left:1083px;top:217px;" width="24" height="24" viewBox="0 0 24 24"><path d="M11.9 0.8V23.4" stroke="#909090" stroke-width="1.3" stroke-dasharray="2.2 1.7"/><g transform="translate(11.9 10.5)"><path d="M-10.6 -0.6L-6.8 -5.3L-3.1 -0.6H-5.2V0A5.2 5.2 0 0 0 5.2 0V-0.6H3.1L6.8 -5.3L10.6 -0.6H8.3V0A8.3 8.3 0 0 1 -8.3 0V-0.6z" fill="#9e9e9e"/><path d="M-10.6 -0.6L-6.8 -5.3L-3.1 -0.6zM3.1 -0.6L6.8 -5.3L10.6 -0.6z" fill="#c2c2c2"/></g></svg>
<svg style="left:1116px;top:217px;" width="24" height="24" viewBox="0 0 24 24"><path d="M0.4 12H23.6" stroke="#909090" stroke-width="1.3" stroke-dasharray="2.2 1.7"/><g transform="translate(10.8 12) rotate(-90)"><path d="M-10.6 -0.6L-6.8 -5.3L-3.1 -0.6H-5.2V0A5.2 5.2 0 0 0 5.2 0V-0.6H3.1L6.8 -5.3L10.6 -0.6H8.3V0A8.3 8.3 0 0 1 -8.3 0V-0.6z" fill="#9e9e9e"/><path d="M-10.6 -0.6L-6.8 -5.3L-3.1 -0.6zM3.1 -0.6L6.8 -5.3L10.6 -0.6z" fill="#c2c2c2"/></g></svg>
<div style="left:1151px;top:216px;width:1px;height:27px;background:#3b3b3b;"></div>
<div style="left:1158px;top:214px;width:31px;height:31px;background:#262626;border-radius:4px;"></div>
<svg style="left:1162px;top:218px;" width="23" height="22" viewBox="0 0 23 22"><path d="M11.5 0.4L15.1 5.2H12.5v8h-2V5.2H7.9z" fill="#c4c4c4"/><rect x="0.4" y="13" width="22.2" height="5.2" fill="#a4a4a4"/><circle cx="2.8" cy="15.6" r="1.3" fill="#262626"/><circle cx="16" cy="15.6" r="1.3" fill="#262626"/><circle cx="20" cy="15.6" r="1.3" fill="#262626"/></svg>
<div style="left:1196.5px;top:45px;width:360px;height:53.5px;border:1.3px solid #2a2a2a;border-radius:5px;"></div>
<div style="left:1202px;top:40px;width:123px;height:12px;background:#484848;"></div>
<span style="left:1205.9px;top:36.0px;font-size:13px;line-height:17px;color:#c6c6c6;letter-spacing:0.235px;">Processing Profiles</span>
<div style="left:1198px;top:62px;width:33px;height:33px;border:1px solid #aaaaa3;border-radius:4px;background:linear-gradient(#4b4b4b,#3b3b3b);"></div>
<svg style="left:1202px;top:67px;" width="25" height="24" viewBox="0 0 25 24"><rect x="1" y="2" width="2.4" height="16.6" fill="#d0d0d0"/><rect x="1" y="20.2" width="2.4" height="2.7" fill="#d0d0d0"/><path d="M3 3h3M3 7.9h3M3 12.8h3M3 17.6h3" stroke="#d0d0d0" stroke-width="2"/><rect x="8" y="1.1" width="15.1" height="3.7" fill="#d2d2d2"/><rect x="8" y="6.5" width="9.1" height="3.1" fill="#8a8a8a"/><rect x="8" y="11.3" width="14" height="3.3" fill="#8a8a8a"/><rect x="8" y="16.2" width="12.1" height="3.7" fill="#d2d2d2"/></svg>
<div style="left:1233px;top:62px;width:180px;height:33px;border:1px solid #aaaaa3;border-radius:4px;background:linear-gradient(#4b4b4b,#3b3b3b);"></div>
<span style="left:1240px;top:69.8px;font-size:13px;line-height:17px;color:#c6c6c6;letter-spacing:-0.137px;">(Last Saved)</span>
<svg style="left:1392px;top:75px;" width="13" height="9" viewBox="0 0 13 9"><path d="M1 1.2h10.8L6.4 8z" fill="#b4b4b4"/></svg>
<div style="left:1415px;top:62px;width:140px;height:33px;border:1px solid #aaaaa3;border-radius:4px;background:linear-gradient(#4b4b4b,#3b3b3b);"></div>
<svg style="left:1419px;top:68px;" width="24" height="21" viewBox="0 0 24 21"><path d="M1 2.6Q1 1 2.6 1h5.6l1.6 2h8.6q1.4 0 1.4 1.4V8H3.4L1 17z" fill="#9e9e9e"/><path d="M4.4 6.6h18.2q1 0 .8 1L21.6 19q-.2 1-1.2 1H2.6q-1.2 0-1-1.2z" fill="#cacaca"/></svg>
<svg style="left:1451px;top:66px;" width="22" height="24" viewBox="0 0 22 24"><path d="M1.2 3.2h19.6v16.4l-3.6 3.6H1.2z" fill="#a8a8a8"/><rect x="3.4" y="5" width="15.2" height="8.2" fill="#3d3d3d"/><rect x="5.2" y="16.6" width="11.6" height="4.8" fill="#3d3d3d"/><rect x="13.4" y="16.6" width="2.4" height="4.8" fill="#c8c8c8"/><path d="M9.4 0.6h3.2v6.6h3.8L11 13.2L5.6 7.2h3.8z" fill="#d4d4d4"/></svg>
<svg style="left:1481px;top:66px;" width="24" height="25" viewBox="0 0 24 25"><rect x="1" y="1.2" width="12.8" height="17" rx="2.2" fill="#8a8a8a"/><rect x="2.6" y="2.8" width="9.6" height="13.8" fill="#787878"/><rect x="9" y="5.6" width="13.6" height="18" rx="2.4" fill="#aaaaaa"/><rect x="10.8" y="7.4" width="10" height="14.4" fill="#8e8e8e"/><path d="M4.6 8.2Q6 14.2 11.4 13.8V10.6l6 4.4l-6 4.2v-3Q5 17 4.6 8.2z" fill="#cfcfcf"/></svg>
<svg style="left:1512px;top:66px;" width="24" height="25" viewBox="0 0 24 25"><rect x="1" y="2.4" width="15" height="17.4" rx="1.6" fill="#8e8e8e"/><rect x="4.6" y="0.6" width="8" height="4" rx="1.6" fill="#a6a6a6"/><rect x="7.4" y="6.4" width="16" height="17.6" rx="2" fill="#b0b0b0"/><rect x="9" y="8" width="13" height="14.4" fill="#8c8c8c"/><path d="M10.4 10.8h11M10.4 15h11M10.4 19.2h11" stroke="#b8b8b8" stroke-width="2.4"/></svg>
<div style="left:1197px;top:105px;width:338px;height:42px;background:#262626;"></div>
<div style="left:1438px;top:105px;width:40px;height:42px;background:#515151;"></div>
<div style="left:1438px;top:143px;width:40px;height:3.4px;background:#4a98e0;"></div>
<svg style="left:1207px;top:114px;" width="22" height="22" viewBox="0 0 22 22"><rect width="22" height="22" fill="#555555"/><path d="M0 0H16.5Q12.2 0.6 10.8 9.4Q9.2 20.6 0 22z" fill="#8e8e8e"/><path d="M2 5.8h7M5.5 2.3v7" stroke="#444" stroke-width="1.7"/><path d="M12.4 16.2h7.6" stroke="#b4b4b4" stroke-width="2"/></svg>
<svg style="left:1248px;top:115px;" width="22" height="22" viewBox="0 0 22 22"><circle cx="11" cy="11" r="8.9" fill="#4c4c4c" stroke="#8e8e8e" stroke-width="2.2"/><circle cx="11" cy="11" r="4.7" fill="#404040" stroke="#8e8e8e" stroke-width="2.1"/><circle cx="11" cy="11" r="0.9" fill="#b0b0b0"/><path d="M2.2 17.8L5.4 15.4M16.6 6.6L19.8 4.2" stroke="#4c4c4c" stroke-width="1.6"/></svg>
<svg style="left:1286px;top:113px;" width="24" height="24" viewBox="0 0 24 24"><defs><clipPath id="cA"><circle cx="11.8" cy="8.9" r="7.3"/></clipPath><clipPath id="cB"><circle cx="8.2" cy="15.4" r="7.3"/></clipPath></defs><circle cx="11.8" cy="8.9" r="7.3" fill="#7e7e7e"/><circle cx="8.2" cy="15.4" r="7.3" fill="#a2a2a2"/><circle cx="15.8" cy="15.4" r="7.3" fill="#8e8e8e"/><circle cx="8.2" cy="15.4" r="7.3" fill="#6c6c6c" clip-path="url(#cA)"/><circle cx="15.8" cy="15.4" r="7.3" fill="#646464" clip-path="url(#cA)"/><circle cx="15.8" cy="15.4" r="7.3" fill="#7a7a7a" clip-path="url(#cB)"/><g clip-path="url(#cA)"><circle cx="15.8" cy="15.4" r="7.3" fill="#4a4a4a" clip-path="url(#cB)"/></g></svg>
<svg style="left:1326px;top:113px;" width="24" height="24" viewBox="0 0 24 24"><g fill="none" stroke="#8c8c8c" stroke-width="1.5"><ellipse cx="12" cy="12" rx="11.6" ry="5" transform="rotate(48 12 12)"/><ellipse cx="12" cy="13" rx="11" ry="5.4" transform="rotate(-22 12 13)" stroke-dasharray="44 9"/></g><circle cx="12" cy="11.9" r="3.2" fill="#c8c8c8"/><path d="M7.4 8.4Q9.2 6.4 11.4 6.2" stroke="#9a9a9a" stroke-width="1.2" fill="none"/></svg>
<svg style="left:1368px;top:114px;" width="20" height="23" viewBox="0 0 20 23"><g fill="none" stroke="#9a9a9a" stroke-linecap="round"><path d="M7.8 13L5.6 4.2" stroke-width="2.5"/><path d="M10.4 12L9.6 2.2" stroke-width="2.6"/><path d="M13 12L13.6 2.8" stroke-width="2.5"/><path d="M15.2 13.5L17.3 6" stroke-width="2.3"/><path d="M7 17L1.8 10.5" stroke-width="2.6"/></g><path d="M5.2 11.5L16.3 11L15.8 17.5Q15.2 20 13.8 22H7Q6.5 19.5 4.6 16z" fill="#9a9a9a"/></svg>
<svg style="left:1406px;top:113px;" width="24" height="24" viewBox="0 0 24 24"><path d="M0.8 4.7V23.1H18.1z" fill="#8e8e8e"/><path d="M4.9 14.2V19.6H10.4z" fill="#262626"/><path d="M1 9.3h2M1 11.3h2M1 13.8h2M1 16.2h2M1 18.4h2M1 20.6h2" stroke="#303030" stroke-width="0.7"/><g fill="none" stroke="#9e9e9e" stroke-width="1.25" stroke-linejoin="round"><path d="M14.8 9.8L7.8 1.3Q5.6 0.4 6.2 2.8z"/><path d="M14.6 9.9L5.2 3.4Q3.4 4.2 5 6z"/><ellipse cx="20.1" cy="10" rx="2.8" ry="2.1" transform="rotate(15 20.1 10)"/><ellipse cx="16.1" cy="15.2" rx="2.1" ry="3" transform="rotate(-20 16.1 15.2)"/><path d="M14 9L17.4 9.6M14.2 9.4L15.4 12.4" stroke-width="1.8"/></g></svg>
<svg style="left:1447px;top:114px;" width="22" height="22" viewBox="0 0 22 22"><rect x="0.00" y="0.00" width="7.4" height="7.4" fill="#a8a8a8"/><rect x="7.34" y="0.00" width="7.4" height="7.4" fill="#8a8a8a"/><rect x="14.68" y="0.00" width="7.4" height="7.4" fill="#a8a8a8"/><rect x="0.00" y="7.34" width="7.4" height="7.4" fill="#7c7c7c"/><rect x="7.34" y="7.34" width="7.4" height="7.4" fill="#a0a0a0"/><rect x="14.68" y="7.34" width="7.4" height="7.4" fill="#747474"/><rect x="0.00" y="14.68" width="7.4" height="7.4" fill="#a8a8a8"/><rect x="7.34" y="14.68" width="7.4" height="7.4" fill="#868686"/><rect x="14.68" y="14.68" width="7.4" height="7.4" fill="#a8a8a8"/></svg>
<svg style="left:1487px;top:114px;" width="22" height="13" viewBox="0 0 22 13"><rect x="0" y="0" width="2.6" height="12.8" fill="#9a9a9a"/><rect x="3.6" y="0" width="1.2" height="12.8" fill="#9a9a9a"/><rect x="6" y="0" width="2.6" height="12.8" fill="#9a9a9a"/><rect x="9.6" y="0" width="1.4" height="12.8" fill="#9a9a9a"/><rect x="12" y="0" width="1" height="12.8" fill="#9a9a9a"/><rect x="14" y="0" width="1.6" height="12.8" fill="#9a9a9a"/><rect x="16.6" y="0" width="2.6" height="12.8" fill="#9a9a9a"/><rect x="20.4" y="0" width="1.2" height="12.8" fill="#9a9a9a"/></svg>
<span style="left:1486.8px;top:128.6px;font-size:8.4px;line-height:8px;color:#9c9c9c;font-weight:700;letter-spacing:-0.1px;-webkit-text-stroke:0.35px #9c9c9c;">META</span>
<svg style="left:1205px;top:156.9px;" width="7" height="9" viewBox="0 0 7 9"><path d="M0.4 0.4v8.2L6.6 4.5z" fill="#8e8e8e"/></svg>
<span style="left:1224.2px;top:153.0px;font-size:13px;line-height:17px;color:#e2e2e2;font-weight:700;letter-spacing:0.229px;">Sensor with Bayer Matrix</span>
<svg style="left:1205px;top:187.9px;" width="7" height="9" viewBox="0 0 7 9"><path d="M0.4 0.4v8.2L6.6 4.5z" fill="#8e8e8e"/></svg>
<span style="left:1224.2px;top:184.0px;font-size:13px;line-height:17px;color:#e2e2e2;font-weight:700;letter-spacing:0.216px;">Raw White Points</span>
<svg style="left:1205px;top:218.9px;" width="7" height="9" viewBox="0 0 7 9"><path d="M0.4 0.4v8.2L6.6 4.5z" fill="#8e8e8e"/></svg>
<span style="left:1224.2px;top:215.0px;font-size:13px;line-height:17px;color:#e2e2e2;font-weight:700;letter-spacing:0.153px;">Preprocess White Balance</span>
<svg style="left:1205px;top:249.9px;" width="7" height="9" viewBox="0 0 7 9"><path d="M0.4 0.4v8.2L6.6 4.5z" fill="#8e8e8e"/></svg>
<span style="left:1224.2px;top:246.0px;font-size:13px;line-height:17px;color:#e2e2e2;font-weight:700;letter-spacing:0.115px;">Preprocessing</span>
<svg style="left:1205px;top:280.9px;" width="7" height="9" viewBox="0 0 7 9"><path d="M0.4 0.4v8.2L6.6 4.5z" fill="#8e8e8e"/></svg>
<span style="left:1224.2px;top:277.0px;font-size:13px;line-height:17px;color:#e2e2e2;font-weight:700;letter-spacing:0.238px;">Dark-Frame</span>
<svg style="left:1203.5px;top:314.4px;" width="9" height="8" viewBox="0 0 9 8"><path d="M0.4 0.8h8.2L4.5 7.6z" fill="#8e8e8e"/></svg>
<span style="left:1224.2px;top:308.0px;font-size:13px;line-height:17px;color:#e2e2e2;font-weight:700;letter-spacing:0.447px;">Flat-Field</span>
<div style="left:1196px;top:177px;width:334px;height:1.4px;background:#2e2e2e;"></div>
<div style="left:1196px;top:208px;width:334px;height:1.4px;background:#2e2e2e;"></div>
<div style="left:1196px;top:239px;width:334px;height:1.4px;background:#2e2e2e;"></div>
<div style="left:1196px;top:270px;width:334px;height:1.4px;background:#2e2e2e;"></div>
<div style="left:1196px;top:301px;width:334px;height:1.4px;background:#2e2e2e;"></div>
<div style="left:1196px;top:548px;width:334px;height:1.4px;background:#2e2e2e;"></div>
<div style="left:1196px;top:579px;width:334px;height:1.4px;background:#2e2e2e;"></div>
<div style="left:1196px;top:332px;width:334px;height:216px;background:#555555;"></div>
<div style="left:1196px;top:332px;width:334px;height:1px;background:#5c5c5c;"></div>
<span style="left:1204.1px;top:344.5px;font-size:13px;line-height:17px;color:#c6c6c6;letter-spacing:0.051px;">File</span>
<div style="left:1227px;top:339px;width:268.5px;height:28px;border:1px solid #aaaaa3;border-radius:4px;background:linear-gradient(#5a5a5a,#474747);"></div>
<span style="left:1234.6px;top:343.6px;font-size:13px;line-height:17px;color:#c6c6c6;letter-spacing:0.629px;">IMG_20200620...70726MAIN.dng</span>
<div style="left:1457px;top:345px;width:1px;height:16px;background:#3a3a3a;"></div>
<svg style="left:1470px;top:346px;" width="16" height="15" viewBox="0 0 16 15"><path d="M1 2h5l1.6 2H15v9H1z" fill="#464646"/><path d="M1 2.2h5l1.6 2H15" fill="none" stroke="#8e8e8e" stroke-width="1.2"/><path d="M1 13.7h14" stroke="#ececec" stroke-width="1.3"/></svg>
<div style="left:1497px;top:339px;width:27px;height:28px;border:1px solid #aaaaa3;border-radius:4px;background:linear-gradient(#5a5a5a,#474747);"></div>
<svg style="left:1503px;top:347px;" width="14" height="14" viewBox="0 0 14 14"><path d="M2.8 2.8l8.2 8.2M11 2.8l-8.2 8.2" stroke="#cacaca" stroke-width="2.8" stroke-linecap="round"/></svg>
<div style="left:1203px;top:375px;width:17px;height:16.5px;border:1.4px solid #a6a6a0;border-bottom:2.2px solid #c4c4be;border-radius:3px;background:linear-gradient(#585858,#494949);"></div>
<span style="left:1225px;top:375.0px;font-size:13px;line-height:17px;color:#c6c6c6;letter-spacing:0.394px;">Auto-selection</span>
<span style="left:1361.5px;top:400px;font-size:12px;line-height:16px;color:#c6c6c6;">-</span>
<span style="left:1204.2px;top:427.0px;font-size:13px;line-height:17px;color:#c6c6c6;letter-spacing:0.521px;">Blur type:</span>
<div style="left:1265px;top:422px;width:259px;height:25.5px;border:1px solid #aaaaa3;border-radius:4px;background:linear-gradient(#5a5a5a,#474747);"></div>
<span style="left:1272.3px;top:427.0px;font-size:13px;line-height:17px;color:#c6c6c6;letter-spacing:0.113px;">Area</span>
<svg style="left:1503px;top:432px;" width="13" height="9" viewBox="0 0 13 9"><path d="M1 1.2h10.8L6.4 8z" fill="#c0c0c0"/></svg>
<span style="left:1205px;top:453.0px;font-size:13px;line-height:17px;color:#c6c6c6;letter-spacing:0.386px;">Blur radius</span>
<div style="left:1438px;top:452px;width:85px;height:19px;border:1px solid #aaaaa3;border-radius:4px;background:linear-gradient(#5a5a5a,#474747);"></div>
<div style="left:1439px;top:453px;width:39px;height:17px;background:#4b4b4b;border-radius:2px 0 0 2px;"></div>
<span style="left:1440px;top:453px;font-size:13px;line-height:17px;color:#c6c6c6;width:33.6px;text-align:right;">32</span>
<div style="left:1482px;top:460.3px;width:14.4px;height:2.2px;background:#d6d6d6;"></div>
<div style="left:1503.6px;top:460.3px;width:14.6px;height:2.2px;background:#d6d6d6;"></div>
<div style="left:1509.8px;top:454px;width:2.2px;height:15px;background:#d6d6d6;"></div>
<div style="left:1208px;top:480px;width:284px;height:4px;background:#525252;border:1px solid #a6a6a0;border-radius:2px;"></div>
<div style="left:1208px;top:480px;width:50px;height:4px;background:#4a90d9;border-radius:2px;"></div>
<div style="left:1251px;top:475px;width:14px;height:14px;border-radius:50%;background:#3a3a3a;border:1.2px solid #a8a8a2;border-bottom:1.8px solid #d0d0ca;"></div>
<svg style="left:1508.4px;top:477.6px;" width="13" height="9" viewBox="0 0 13 9"><path d="M0.2 7.4L1.5 1.6L3.2 3.4Q7.8 -1.2 12.8 3.8Q8.2 2.2 5.2 5.4L6.9 7.2z" fill="#9a9a9a"/></svg>
<span style="left:1205px;top:494.0px;font-size:13px;line-height:17px;color:#c6c6c6;letter-spacing:0.452px;">Clip control</span>
<div style="left:1438px;top:493px;width:85px;height:19px;border:1px solid #aaaaa3;border-radius:4px;background:linear-gradient(#5a5a5a,#474747);"></div>
<div style="left:1439px;top:494px;width:39px;height:17px;background:#4b4b4b;border-radius:2px 0 0 2px;"></div>
<span style="left:1440px;top:494px;font-size:13px;line-height:17px;color:#c6c6c6;width:33.6px;text-align:right;">0</span>
<div style="left:1482px;top:501.3px;width:14.4px;height:2.2px;background:#868686;"></div>
<div style="left:1503.6px;top:501.3px;width:14.6px;height:2.2px;background:#d6d6d6;"></div>
<div style="left:1509.8px;top:495px;width:2.2px;height:15px;background:#d6d6d6;"></div>
<div style="left:1209px;top:524.7px;width:264px;height:4px;background:#525252;border:1px solid #a6a6a0;border-radius:2px;"></div>
<div style="left:1208.8px;top:519.7px;width:14px;height:14px;border-radius:50%;background:#3a3a3a;border:1.2px solid #a8a8a2;border-bottom:1.8px solid #d0d0ca;"></div>
<svg style="left:1489.3px;top:522.6px;" width="13" height="9" viewBox="0 0 13 9"><path d="M0.2 7.4L1.5 1.6L3.2 3.4Q7.8 -1.2 12.8 3.8Q8.2 2.2 5.2 5.4L6.9 7.2z" fill="#9a9a9a"/></svg>
<div style="left:1506px;top:518.5px;width:17px;height:16.5px;border:1.4px solid #a6a6a0;border-bottom:2.2px solid #c4c4be;border-radius:3px;background:linear-gradient(#585858,#494949);"></div>
<svg style="left:1200.5px;top:556.5px;" width="15" height="16" viewBox="0 0 15 16"><path d="M4.37 4.42A5.1 5.1 0 1 0 10.23 4.42" fill="none" stroke="#f0f0f0" stroke-width="2"/><path d="M7.3 1V8" stroke="#f0f0f0" stroke-width="2"/></svg>
<span style="left:1224.2px;top:555.0px;font-size:13px;line-height:17px;color:#e2e2e2;font-weight:700;letter-spacing:0.21px;">Capture Sharpening</span>
<svg style="left:1300px;top:586px;" width="140" height="56" viewBox="0 0 140 56"><g transform="translate(11.9 10.6)"><g transform="rotate(0)"><circle cx="0" cy="-4.6" r="1.3" fill="#a0a0a0"/><path d="M0 -2.2V-4.6" stroke="#a0a0a0" stroke-width="1"/></g><g transform="rotate(45)"><circle cx="0" cy="-4.6" r="1.3" fill="#a0a0a0"/><path d="M0 -2.2V-4.6" stroke="#a0a0a0" stroke-width="1"/></g><g transform="rotate(90)"><circle cx="0" cy="-4.6" r="1.3" fill="#a0a0a0"/><path d="M0 -2.2V-4.6" stroke="#a0a0a0" stroke-width="1"/></g><g transform="rotate(135)"><circle cx="0" cy="-4.6" r="1.3" fill="#a0a0a0"/><path d="M0 -2.2V-4.6" stroke="#a0a0a0" stroke-width="1"/></g><g transform="rotate(180)"><circle cx="0" cy="-4.6" r="1.3" fill="#a0a0a0"/><path d="M0 -2.2V-4.6" stroke="#a0a0a0" stroke-width="1"/></g><g transform="rotate(225)"><circle cx="0" cy="-4.6" r="1.3" fill="#a0a0a0"/><path d="M0 -2.2V-4.6" stroke="#a0a0a0" stroke-width="1"/></g><g transform="rotate(270)"><circle cx="0" cy="-4.6" r="1.3" fill="#a0a0a0"/><path d="M0 -2.2V-4.6" stroke="#a0a0a0" stroke-width="1"/></g><g transform="rotate(315)"><circle cx="0" cy="-4.6" r="1.3" fill="#a0a0a0"/><path d="M0 -2.2V-4.6" stroke="#a0a0a0" stroke-width="1"/></g><circle r="1.9" fill="none" stroke="#a0a0a0" stroke-width="0.9"/><circle r="0.7" fill="#a0a0a0"/></g><g transform="translate(126.1 10.6)"><g transform="rotate(0)"><circle cx="0" cy="-4.6" r="1.3" fill="#a0a0a0"/><path d="M0 -2.2V-4.6" stroke="#a0a0a0" stroke-width="1"/></g><g transform="rotate(45)"><circle cx="0" cy="-4.6" r="1.3" fill="#a0a0a0"/><path d="M0 -2.2V-4.6" stroke="#a0a0a0" stroke-width="1"/></g><g transform="rotate(90)"><circle cx="0" cy="-4.6" r="1.3" fill="#a0a0a0"/><path d="M0 -2.2V-4.6" stroke="#a0a0a0" stroke-width="1"/></g><g transform="rotate(135)"><circle cx="0" cy="-4.6" r="1.3" fill="#a0a0a0"/><path d="M0 -2.2V-4.6" stroke="#a0a0a0" stroke-width="1"/></g><g transform="rotate(180)"><circle cx="0" cy="-4.6" r="1.3" fill="#a0a0a0"/><path d="M0 -2.2V-4.6" stroke="#a0a0a0" stroke-width="1"/></g><g transform="rotate(225)"><circle cx="0" cy="-4.6" r="1.3" fill="#a0a0a0"/><path d="M0 -2.2V-4.6" stroke="#a0a0a0" stroke-width="1"/></g><g transform="rotate(270)"><circle cx="0" cy="-4.6" r="1.3" fill="#a0a0a0"/><path d="M0 -2.2V-4.6" stroke="#a0a0a0" stroke-width="1"/></g><g transform="rotate(315)"><circle cx="0" cy="-4.6" r="1.3" fill="#a0a0a0"/><path d="M0 -2.2V-4.6" stroke="#a0a0a0" stroke-width="1"/></g><circle r="1.9" fill="none" stroke="#a0a0a0" stroke-width="0.9"/><circle r="0.7" fill="#a0a0a0"/></g><g transform="translate(31.2 16.2)"><g transform="rotate(0)"><circle cx="0" cy="-8.4" r="2.8" fill="#a0a0a0"/><path d="M0 -2.4L-1.9 -6.8L1.9 -6.8z" fill="#a0a0a0"/></g><g transform="rotate(45)"><circle cx="0" cy="-8.4" r="2.8" fill="#a0a0a0"/><path d="M0 -2.4L-1.9 -6.8L1.9 -6.8z" fill="#a0a0a0"/></g><g transform="rotate(90)"><circle cx="0" cy="-8.4" r="2.8" fill="#a0a0a0"/><path d="M0 -2.4L-1.9 -6.8L1.9 -6.8z" fill="#a0a0a0"/></g><g transform="rotate(135)"><circle cx="0" cy="-8.4" r="2.8" fill="#a0a0a0"/><path d="M0 -2.4L-1.9 -6.8L1.9 -6.8z" fill="#a0a0a0"/></g><g transform="rotate(180)"><circle cx="0" cy="-8.4" r="2.8" fill="#a0a0a0"/><path d="M0 -2.4L-1.9 -6.8L1.9 -6.8z" fill="#a0a0a0"/></g><g transform="rotate(225)"><circle cx="0" cy="-8.4" r="2.8" fill="#a0a0a0"/><path d="M0 -2.4L-1.9 -6.8L1.9 -6.8z" fill="#a0a0a0"/></g><g transform="rotate(270)"><circle cx="0" cy="-8.4" r="2.8" fill="#a0a0a0"/><path d="M0 -2.4L-1.9 -6.8L1.9 -6.8z" fill="#a0a0a0"/></g><g transform="rotate(315)"><circle cx="0" cy="-8.4" r="2.8" fill="#a0a0a0"/><path d="M0 -2.4L-1.9 -6.8L1.9 -6.8z" fill="#a0a0a0"/></g><circle r="3.3" fill="#484848"/><circle r="1.7" fill="#a0a0a0"/></g><g transform="translate(106.8 16.2)"><g transform="rotate(0)"><circle cx="0" cy="-8.4" r="2.8" fill="#a0a0a0"/><path d="M0 -2.4L-1.9 -6.8L1.9 -6.8z" fill="#a0a0a0"/></g><g transform="rotate(45)"><circle cx="0" cy="-8.4" r="2.8" fill="#a0a0a0"/><path d="M0 -2.4L-1.9 -6.8L1.9 -6.8z" fill="#a0a0a0"/></g><g transform="rotate(90)"><circle cx="0" cy="-8.4" r="2.8" fill="#a0a0a0"/><path d="M0 -2.4L-1.9 -6.8L1.9 -6.8z" fill="#a0a0a0"/></g><g transform="rotate(135)"><circle cx="0" cy="-8.4" r="2.8" fill="#a0a0a0"/><path d="M0 -2.4L-1.9 -6.8L1.9 -6.8z" fill="#a0a0a0"/></g><g transform="rotate(180)"><circle cx="0" cy="-8.4" r="2.8" fill="#a0a0a0"/><path d="M0 -2.4L-1.9 -6.8L1.9 -6.8z" fill="#a0a0a0"/></g><g transform="rotate(225)"><circle cx="0" cy="-8.4" r="2.8" fill="#a0a0a0"/><path d="M0 -2.4L-1.9 -6.8L1.9 -6.8z" fill="#a0a0a0"/></g><g transform="rotate(270)"><circle cx="0" cy="-8.4" r="2.8" fill="#a0a0a0"/><path d="M0 -2.4L-1.9 -6.8L1.9 -6.8z" fill="#a0a0a0"/></g><g transform="rotate(315)"><circle cx="0" cy="-8.4" r="2.8" fill="#a0a0a0"/><path d="M0 -2.4L-1.9 -6.8L1.9 -6.8z" fill="#a0a0a0"/></g><circle r="3.3" fill="#484848"/><circle r="1.7" fill="#a0a0a0"/></g><g transform="translate(68.9 28.4)"><g transform="rotate(0) scale(1 1.0)"><ellipse cx="0" cy="-17.4" rx="4" ry="5.4" fill="#a0a0a0"/><path d="M-2.6 -15L0 -7L2.6 -15z" fill="#a0a0a0"/><ellipse cx="-5.9" cy="-13" rx="3.1" ry="6" transform="rotate(-22 -5.9 -13)" fill="#a0a0a0"/><ellipse cx="5.9" cy="-13" rx="3.1" ry="6" transform="rotate(22 5.9 -13)" fill="#a0a0a0"/><ellipse cx="0" cy="-11.6" rx="1.5" ry="3.2" fill="#484848"/></g><g transform="rotate(51)"><path d="M-0.5 -10L-1.5 -25Q0 -27 1.5 -25L0.5 -10z" fill="#a0a0a0"/></g><g transform="rotate(90) scale(1 1.05)"><ellipse cx="0" cy="-17.4" rx="4" ry="5.4" fill="#a0a0a0"/><path d="M-2.6 -15L0 -7L2.6 -15z" fill="#a0a0a0"/><ellipse cx="-5.9" cy="-13" rx="3.1" ry="6" transform="rotate(-22 -5.9 -13)" fill="#a0a0a0"/><ellipse cx="5.9" cy="-13" rx="3.1" ry="6" transform="rotate(22 5.9 -13)" fill="#a0a0a0"/><ellipse cx="0" cy="-11.6" rx="1.5" ry="3.2" fill="#484848"/></g><g transform="rotate(129)"><path d="M-0.5 -10L-1.5 -25Q0 -27 1.5 -25L0.5 -10z" fill="#a0a0a0"/></g><g transform="rotate(180) scale(1 1.0)"><ellipse cx="0" cy="-17.4" rx="4" ry="5.4" fill="#a0a0a0"/><path d="M-2.6 -15L0 -7L2.6 -15z" fill="#a0a0a0"/><ellipse cx="-5.9" cy="-13" rx="3.1" ry="6" transform="rotate(-22 -5.9 -13)" fill="#a0a0a0"/><ellipse cx="5.9" cy="-13" rx="3.1" ry="6" transform="rotate(22 5.9 -13)" fill="#a0a0a0"/><ellipse cx="0" cy="-11.6" rx="1.5" ry="3.2" fill="#484848"/></g><g transform="rotate(231)"><path d="M-0.5 -10L-1.5 -25Q0 -27 1.5 -25L0.5 -10z" fill="#a0a0a0"/></g><g transform="rotate(270) scale(1 1.05)"><ellipse cx="0" cy="-17.4" rx="4" ry="5.4" fill="#a0a0a0"/><path d="M-2.6 -15L0 -7L2.6 -15z" fill="#a0a0a0"/><ellipse cx="-5.9" cy="-13" rx="3.1" ry="6" transform="rotate(-22 -5.9 -13)" fill="#a0a0a0"/><ellipse cx="5.9" cy="-13" rx="3.1" ry="6" transform="rotate(22 5.9 -13)" fill="#a0a0a0"/><ellipse cx="0" cy="-11.6" rx="1.5" ry="3.2" fill="#484848"/></g><g transform="rotate(309)"><path d="M-0.5 -10L-1.5 -25Q0 -27 1.5 -25L0.5 -10z" fill="#a0a0a0"/></g><circle r="7.6" fill="#484848"/><g transform="rotate(22.5)"><path d="M0 -5.5L-1.3 -9.5L1.3 -9.5z" fill="#484848"/></g><g transform="rotate(67.5)"><path d="M0 -5.5L-1.3 -9.5L1.3 -9.5z" fill="#484848"/></g><g transform="rotate(112.5)"><path d="M0 -5.5L-1.3 -9.5L1.3 -9.5z" fill="#484848"/></g><g transform="rotate(157.5)"><path d="M0 -5.5L-1.3 -9.5L1.3 -9.5z" fill="#484848"/></g><g transform="rotate(202.5)"><path d="M0 -5.5L-1.3 -9.5L1.3 -9.5z" fill="#484848"/></g><g transform="rotate(247.5)"><path d="M0 -5.5L-1.3 -9.5L1.3 -9.5z" fill="#484848"/></g><g transform="rotate(292.5)"><path d="M0 -5.5L-1.3 -9.5L1.3 -9.5z" fill="#484848"/></g><g transform="rotate(337.5)"><path d="M0 -5.5L-1.3 -9.5L1.3 -9.5z" fill="#484848"/></g><circle r="3.3" fill="#a0a0a0"/></g></svg>
<svg style="left:12px;top:997px;" width="22" height="24" viewBox="0 0 22 24"><path d="M0.8 3.4h19.8v15.6l-3.8 4.2H0.8z" fill="#a4a4a4"/><rect x="3" y="5.4" width="15.4" height="8.4" fill="#3f3f3f"/><rect x="5" y="16.6" width="11.4" height="4.8" fill="#3f3f3f"/><rect x="13" y="16.8" width="2.4" height="4.4" fill="#c4c4c4"/><path d="M9.2 0.8h3.4v6.4h3.8L10.9 13.6L5.4 7.2h3.8z" fill="#d6d6d6"/></svg>
<svg style="left:46px;top:997px;" width="25" height="24" viewBox="0 0 25 24"><polygon points="16.07,14.85 16.07,16.15 14.40,17.05 14.04,18.04 14.74,19.80 13.90,20.80 12.04,20.41 11.14,20.94 10.54,22.74 9.25,22.97 8.08,21.48 7.05,21.30 5.43,22.30 4.30,21.64 4.36,19.74 3.69,18.94 1.80,18.67 1.36,17.44 2.62,16.02 2.62,14.98 1.36,13.56 1.80,12.33 3.69,12.06 4.36,11.26 4.30,9.36 5.43,8.70 7.05,9.70 8.08,9.52 9.25,8.03 10.54,8.26 11.14,10.06 12.04,10.59 13.90,10.20 14.74,11.20 14.04,12.96 14.40,13.95" fill="#989898" stroke="#989898" stroke-width="0.6" stroke-linejoin="round"/><circle cx="8.6" cy="15.5" r="4.4" fill="#7c7c7c"/><circle cx="8.6" cy="15.5" r="2.2" fill="#484848"/><polygon points="23.08,6.22 23.08,7.18 21.75,7.81 21.50,8.52 22.11,9.85 21.49,10.59 20.07,10.22 19.42,10.60 19.02,12.01 18.08,12.18 17.23,10.98 16.49,10.85 15.28,11.68 14.45,11.21 14.56,9.74 14.08,9.17 12.62,9.02 12.29,8.12 13.32,7.07 13.32,6.33 12.29,5.28 12.62,4.38 14.08,4.23 14.56,3.66 14.45,2.19 15.28,1.72 16.49,2.55 17.23,2.42 18.08,1.22 19.02,1.39 19.42,2.80 20.07,3.18 21.49,2.81 22.11,3.55 21.50,4.88 21.75,5.59" fill="#989898" stroke="#989898" stroke-width="0.6" stroke-linejoin="round"/><circle cx="17.6" cy="6.7" r="3.0" fill="#7c7c7c"/><circle cx="17.6" cy="6.7" r="1.5" fill="#484848"/></svg>
<svg style="left:81px;top:997px;" width="25" height="24" viewBox="0 0 25 24"><path d="M1.4 1Q3.2 0 4.6 1.6L8.5 14.4L5.5 15.4L0.9 3.2Q0.5 1.6 1.4 1z" fill="#9a9a9a"/><path d="M5.8 16.3L8.7 15.3L9.6 18.6Q9.4 21 8.4 22.8Q6.8 21 5.8 16.3z" fill="#9a9a9a"/><path d="M16.4 0.8C21.4 0.8 23.8 5 23.6 9.4C23.4 14 20.4 18 16.6 18C14.4 18 13.8 16.4 12.4 14.6C11 12.8 9.2 12.6 9.2 9.4C9.2 5 12 0.8 16.4 0.8z" fill="#9a9a9a"/><ellipse cx="13" cy="5.6" rx="1.9" ry="1.6" fill="#484848" transform="rotate(-30 13 5.6)"/><circle cx="18.2" cy="4.6" r="1.5" fill="#484848"/><circle cx="20.6" cy="8.6" r="1.5" fill="#484848"/><circle cx="19.8" cy="12.6" r="1.5" fill="#484848"/><circle cx="16.4" cy="14.8" r="1.5" fill="#484848"/></svg>
<div style="left:114px;top:995px;width:1px;height:29px;background:#3b3b3b;"></div>
<span style="left:243.3px;top:993px;font-size:13px;line-height:17px;color:#c6c6c6;letter-spacing:-0.27px;">Ready</span>
<div style="left:119px;top:1018px;width:285px;height:8.4px;background:#3a3a3a;border-radius:4.2px;"></div>
<div style="left:408px;top:995px;width:1px;height:29px;background:#3b3b3b;"></div>
<div style="left:414.3px;top:993.2px;width:197.4px;height:32.2px;border:1px solid #aaaaa3;border-radius:4px;background:linear-gradient(#4b4b4b,#3b3b3b);"></div>
<span style="left:421.4px;top:1001px;font-size:13px;line-height:17px;color:#c6c6c6;letter-spacing:0.38px;">None</span>
<svg style="left:591px;top:1006px;" width="13" height="9" viewBox="0 0 13 9"><path d="M0.6 0.8h11.8L6.5 8z" fill="#c0c0c0"/></svg>
<div style="left:616.2px;top:993.2px;width:49.7px;height:32.2px;border:1px solid #aaaaa3;border-radius:4px;background:linear-gradient(#4b4b4b,#3b3b3b);"></div>
<svg style="left:621px;top:998px;" width="23" height="22" viewBox="0 0 23 22"><path d="M0 1.2Q5.6 -0.4 11 3.4Q16.4 7.2 22.4 5.8V19Q16 18.2 11 20.2Q5.6 22.4 0 21.2z" fill="#7c7c7c"/><path d="M0 5.4Q5.6 4.6 11 8Q16.4 11 22.4 9.8" fill="none" stroke="#949494" stroke-width="1.1"/><path d="M0 10.6Q6 10.6 11 13Q16.4 15.4 22.4 14.4" fill="none" stroke="#949494" stroke-width="1.1"/><path d="M0 16Q6 17 11 17Q16.4 17 22.4 17.6" fill="none" stroke="#8a8a8a" stroke-width="1"/></svg>
<svg style="left:651px;top:1006px;" width="11" height="7" viewBox="0 0 11 7"><path d="M0.4 0.6h9.6L5.2 5.6z" fill="#6c6c6c"/></svg>
<svg style="left:674px;top:997px;" width="23" height="24" viewBox="0 0 23 24"><path d="M2.4 3V20.6H20" fill="none" stroke="#9c9c9c" stroke-width="1.2"/><path d="M2.4 1.1L0.1 4.8h4.7zM22.2 20.6L17.9 18v5z" fill="#9c9c9c"/><path d="M8.1 0.9Q14 3 22 12.4L10.4 18Q5.6 9 8.1 0.9z" fill="#a0a0a0"/><path d="M9.2 5.6L20 12.6L10.6 17z" fill="#848484"/></svg>
<svg style="left:708px;top:997px;" width="24" height="24" viewBox="0 0 24 24"><path d="M3.6 22.9Q1 12 1.6 5Q2 1.2 4.6 1.1Q8.6 1.6 10.4 9.6Q8 5.8 5.6 5.8Q4 6 3.8 10Q3.6 16 4.2 22.9z" fill="#969696"/><path d="M12.1 1.1H17.5L16.3 16H13.5z" fill="#a0a0a0"/><circle cx="14.7" cy="20.1" r="2.9" fill="#a0a0a0"/><path d="M17 10.9L22.9 16.8V23.1L21.4 22.7L17 15.6z" fill="#909090"/></svg>
<div style="left:741.5px;top:995px;width:1px;height:29px;background:#3b3b3b;"></div>
<svg style="left:751px;top:998px;" width="23" height="22" viewBox="0 0 23 22"><path d="M0.8 11L10.6 1.2V6.6H21.4V15.4H10.6V20.8z" fill="#8c8c8c" stroke="#a6a6a6" stroke-width="1.1"/></svg>
<svg style="left:786px;top:997px;" width="22" height="24" viewBox="0 0 22 24"><path d="M6 0.8L10.8 8.2H8V21.6H4V8.2H1.2z" fill="#a2a2a2"/><path d="M16 23.2L11.2 15.8H14V2.4H18V15.8H20.8z" fill="#a2a2a2"/></svg>
<svg style="left:820px;top:998px;" width="23" height="22" viewBox="0 0 23 22"><path d="M22.2 11L12.4 1.2V6.6H1.6V15.4H12.4V20.8z" fill="#8c8c8c" stroke="#a6a6a6" stroke-width="1.1"/></svg>
<div style="left:853.2px;top:995px;width:1px;height:29px;background:#3b3b3b;"></div>
<svg style="left:862.8px;top:997px;" width="22" height="23" viewBox="0 0 22 23"><circle cx="9.1" cy="9.1" r="8.1" fill="none" stroke="#9a9a9a" stroke-width="2"/><path d="M15.2 15.4L20.6 20.4" stroke="#9a9a9a" stroke-width="4" stroke-linecap="butt"/><path d="M4 9.1h10.2" stroke="#c2c2c2" stroke-width="2.2"/></svg>
<svg style="left:895.8px;top:997px;" width="22" height="23" viewBox="0 0 22 23"><circle cx="9.1" cy="9.1" r="8.1" fill="none" stroke="#9a9a9a" stroke-width="2"/><path d="M15.2 15.4L20.6 20.4" stroke="#9a9a9a" stroke-width="4" stroke-linecap="butt"/><path d="M4 9.1h10.2M9.1 4v10.2" stroke="#c2c2c2" stroke-width="2.2"/></svg>
<svg style="left:928.9px;top:997px;" width="22" height="23" viewBox="0 0 22 23"><circle cx="9.1" cy="9.1" r="8.1" fill="none" stroke="#9a9a9a" stroke-width="2"/><path d="M15.2 15.4L20.6 20.4" stroke="#9a9a9a" stroke-width="4" stroke-linecap="butt"/><path d="M5.2 7.8V5.4h2.4M10.6 5.4h2.4v2.4M13 10.4v2.4h-2.4M7.6 12.8H5.2v-2.4" fill="none" stroke="#c2c2c2" stroke-width="1.3"/></svg>
<svg style="left:961.9px;top:997px;" width="22" height="23" viewBox="0 0 22 23"><circle cx="9.1" cy="9.1" r="8.1" fill="none" stroke="#9a9a9a" stroke-width="2"/><path d="M15.2 15.4L20.6 20.4" stroke="#9a9a9a" stroke-width="4" stroke-linecap="butt"/><path d="M5.8 3.6V12.4H14.6M3.6 5.8H12.4V14.6" fill="none" stroke="#b4b4b4" stroke-width="1.3"/></svg>
<svg style="left:994.9px;top:997px;" width="22" height="23" viewBox="0 0 22 23"><circle cx="9.1" cy="9.1" r="8.1" fill="none" stroke="#9a9a9a" stroke-width="2"/><path d="M15.2 15.4L20.6 20.4" stroke="#9a9a9a" stroke-width="4" stroke-linecap="butt"/></svg>
<span style="left:997.6px;top:1000.4px;font-size:11px;line-height:12px;color:#b4b4b4;font-weight:700;transform:scaleX(0.68);transform-origin:0 0;">1:1</span>
<span style="left:1038.8px;top:1000.0px;font-size:13px;line-height:17px;color:#c6c6c6;letter-spacing:0.39px;">10%</span>
<svg style="left:1082.6px;top:997px;" width="23" height="22" viewBox="0 0 23 22"><path d="M0.4 0.2H22.6V21H14.6V19H20.6V4.6H2.6V9H0.4z" fill="#a6a6a6"/><circle cx="2.6" cy="2.4" r="1.1" fill="#3a3a3a"/><circle cx="6.2" cy="2.4" r="1.1" fill="#3a3a3a"/><circle cx="9.8" cy="2.4" r="1.1" fill="#3a3a3a"/><circle cx="19.8" cy="2.4" r="1.1" fill="#3a3a3a"/><path d="M1.4 16h10M6.4 11v10" stroke="#d4d4d4" stroke-width="2.3"/></svg>
<div style="left:1115px;top:995px;width:1px;height:29px;background:#3b3b3b;"></div>
<svg style="left:1126.4px;top:999.6px;" width="20" height="19" viewBox="0 0 20 19"><path d="M5.4 5L14.2 13.8M14.2 5L5.4 13.8" stroke="#9a9a9a" stroke-width="1.5"/><path d="M0.6 0.4h6L0.6 6.4zM19 0.4h-6L19 6.4zM0.6 18.4h6L0.6 12.4zM19 18.4h-6L19 12.4z" fill="#b8b8b8"/></svg>
<div style="left:1156px;top:993px;width:31px;height:32.6px;background:#262626;border-radius:4px;"></div>
<svg style="left:1162px;top:997.6px;" width="20" height="23" viewBox="0 0 20 23"><rect x="0.9" y="0.4" width="5.2" height="22" fill="#a4a4a4"/><circle cx="3.5" cy="2.9" r="1.3" fill="#262626"/><circle cx="3.5" cy="6.8" r="1.3" fill="#262626"/><circle cx="3.5" cy="19.6" r="1.3" fill="#262626"/><path d="M6 10.4h8V7.8L18.9 11.4L14 15V12.4H6z" fill="#c6c6c6"/></svg>
</body></html>
